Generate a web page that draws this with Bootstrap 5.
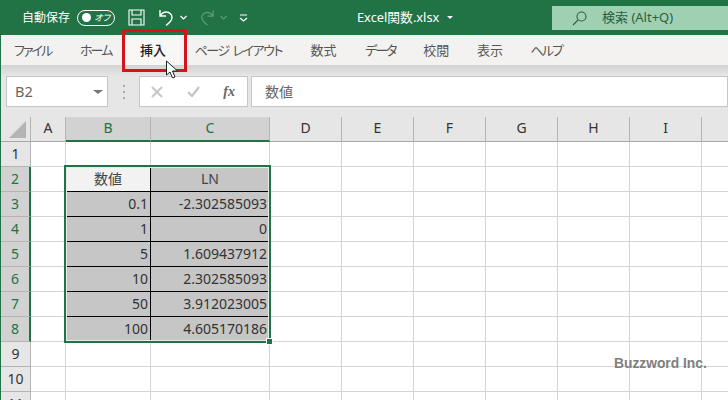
<!DOCTYPE html>
<html lang="ja">
<head>
<meta charset="utf-8">
<title>Excel関数.xlsx</title>
<link href="https://cdn.jsdelivr.net/npm/bootstrap@5.3.0/dist/css/bootstrap.min.css" rel="stylesheet">
<style>
html,body{width:728px;height:400px;overflow:hidden;margin:0;background:#fff}
body{font-family:"Noto Sans","Noto Sans CJK JP",sans-serif;color:#444;position:relative;font-feature-settings:"palt"}
.xl-title{height:35px;background:#217346;color:#fff;font-size:12px;padding-left:22px}
.xl-toggle{width:38px;height:16px;border:1px solid #fff;border-radius:8px;margin-left:7px;font-size:9px;font-style:italic;padding:0 4px;white-space:nowrap}
.xl-dot{width:9px;height:9px;border-radius:50%;background:#fff;flex:none}
.xl-save{margin-left:13px}
.xl-undo{margin-left:13px}
.xl-car{margin-left:5px}
.xl-redo{margin-left:12px}
.xl-qat{margin-left:12px;margin-right:0}
.xl-name{position:absolute;left:357px;top:0;height:35px;font-size:12.800px}
.xl-name-tri{width:0;height:0;border-left:3.500px solid transparent;border-right:3.500px solid transparent;border-top:3.500px solid #fff}
.xl-search{position:absolute;left:552px;top:6px;width:176px;height:24px;background:#9fd0b2;color:#2b5f40;font-size:13px;padding-left:20px}
.xl-search span{margin-left:15px}
.xl-tabs{height:30px;background:#f3f2f1;font-size:13px;padding-left:0;color:#555;border-left:1px solid #217346}
.xl-tab{padding:0 14.300px;height:30px;line-height:30px;white-space:nowrap}
.xl-tab-first{padding-left:13px}
.xl-kana{letter-spacing:-1.900px}
.xl-kana-long{letter-spacing:-1.500px;word-spacing:2px}
.xl-tab-tight{margin-right:-1px}
.xl-tab-on{background:#f8f7f6;color:#222;font-weight:500}
.xl-shade{height:11px;background:linear-gradient(#d2d2d2,#e6e6e6);border-left:1px solid #217346}
.xl-fbar{height:41px;background:#e6e6e6;padding:0 0 10px 5px;border-left:1px solid #217346}
.xl-box{background:#fff;border:1px solid #c6c6c6;height:31px}
.xl-namebox{width:102px;font-size:14.500px;color:#666;padding:0 4px 0 8px}
.xl-tri{width:0;height:0;border-left:5px solid transparent;border-right:5px solid transparent;border-top:4px solid #777}
.xl-dots{width:31px;justify-content:center;color:#aaa}
.xl-dots i{display:block;width:2px;height:2px;background:#aaa;margin:2px 0}
.xl-btns{width:109px;padding:0 12px 0 11px}
.xl-fx{font-family:"Liberation Serif",serif;font-style:italic;font-weight:700;font-size:14px;color:#666}
.xl-input{margin-left:3px;flex:1;font-size:14px;color:#666;padding-left:13px}
.xl-sheetwrap{position:relative;width:728px;border-left:1px solid #217346;overflow:hidden}
.xl-grid{border-collapse:separate;border-spacing:0;table-layout:fixed;width:760px;font-size:14px;color:#444}
.xl-grid td,.xl-grid th{height:25px;padding:0;line-height:23px;vertical-align:top;border-right:1px solid #d4d4d4;border-bottom:1px solid #d4d4d4;overflow:hidden;white-space:nowrap}
.xl-grid thead th{height:25px;padding:0;line-height:22px;vertical-align:top;background:#e6e6e6;border-right:1px solid #b4b4b4;border-bottom:1px solid #a8a8a8;text-align:center;font-weight:400;color:#333}
.xl-grid thead th.xl-hs{background:#d2d2d2;color:#217346;border-bottom:2px solid #217346}
.xl-grid tbody th{background:#e6e6e6;border-right:1px solid #b4b4b4;border-bottom:1px solid #b4b4b4;text-align:center;font-weight:400;color:#333}
.xl-grid tbody th.xl-hs{background:#d2d2d2;color:#217346;border-right:2px solid #217346}
.xl-corner{position:relative}
.xl-corner svg{position:absolute;left:8px;top:4px}
.xl-grid td.xl-c{background:#c6c6c6;border-color:#000;text-align:right;padding-right:2px;color:#333}
.xl-grid td.xl-l{text-align:center;padding-right:0;color:#444}
.xl-grid td.xl-w{background:#f2f2f2}
.xl-sel{position:absolute;left:63px;top:48px;width:207px;height:178px;border:2px solid #217346;box-shadow:inset 0 0 0 1px #e8e8e8;pointer-events:none}
.xl-handle{position:absolute;right:-4px;bottom:-4px;background:#217346;border:1px solid #fff;box-sizing:content-box;width:5px;height:5px}
.xl-red{position:absolute;left:122px;top:29px;width:65px;height:43px;border:3px solid #d3141a}
.xl-cursor{position:absolute;left:165px;top:60px}
.xl-mark{position:absolute;left:614px;top:354px;font-family:"Liberation Sans",sans-serif;font-size:13.800px;font-weight:700;color:#808080;white-space:nowrap}
</style>
</head>
<body>
<div class="xl-title d-flex align-items-center">
  <span>自動保存</span>
  <div class="xl-toggle d-flex align-items-center justify-content-between"><i class="xl-dot"></i><span>オフ</span></div>
  <svg class="xl-save" width="17" height="17" viewBox="0 0 17 17" fill="none" stroke="#fff" stroke-width="1.100"><path d="M1 1h15v15H1zM4 1v5h9V1M4 16v-6h9v6"/></svg>
  <svg class="xl-undo" width="17" height="18" viewBox="0 0 17 18" fill="none" stroke="#fff" stroke-width="1.400"><path d="M2 1v6h6M2 7c2-3 4-4 6-4 4 0 6 3 6 5.500 0 3-2 5-6 8"/></svg>
  <svg class="xl-car" width="7" height="5" viewBox="0 0 7 5" fill="none" stroke="#fff" stroke-width="1.200"><path d="M.5 1l3 3 3-3"/></svg>
  <svg class="xl-redo" width="16" height="18" viewBox="0 0 17 18" fill="none" stroke="#5f9c79" stroke-width="1.300"><path d="M15 1v6H9M15 7c-2-3-4-4-6-4C5 3 3 6 3 8.500c0 3 2 5 6 8"/></svg>
  <svg class="xl-car" width="7" height="5" viewBox="0 0 7 5" fill="none" stroke="#5f9c79" stroke-width="1.200"><path d="M.5 1l3 3 3-3"/></svg>
  <svg class="xl-qat" width="9" height="8" viewBox="0 0 9 8" fill="none" stroke="#fff" stroke-width="1.200"><path d="M1 1h7M1 4l3.500 3L8 4"/></svg>
</div>
<div class="xl-name d-flex align-items-center gap-2 text-white"><span>Excel関数.xlsx</span><i class="xl-name-tri"></i></div>
<div class="xl-search d-flex align-items-center">
  <svg width="15" height="15" viewBox="0 0 15 15" fill="none" stroke="#2b5f40" stroke-width="1.100"><circle cx="9.500" cy="5.500" r="4.500"/><path d="M6 9l-5 5"/></svg>
  <span>検索 (Alt+Q)</span>
</div>
<div class="xl-tabs d-flex">
  <div class="xl-tab xl-tab-first xl-kana">ファイル</div>
  <div class="xl-tab xl-kana">ホーム</div>
  <div class="xl-tab xl-tab-on">挿入</div>
  <div class="xl-tab xl-kana-long">ページ レイアウト</div>
  <div class="xl-tab">数式</div>
  <div class="xl-tab xl-kana xl-tab-tight">データ</div>
  <div class="xl-tab xl-tab-tight">校閲</div>
  <div class="xl-tab xl-tab-tight">表示</div>
  <div class="xl-tab xl-kana">ヘルプ</div>
</div>
<div class="xl-shade"></div>
<div class="xl-fbar d-flex">
  <div class="xl-box xl-namebox d-flex align-items-center justify-content-between"><span>B2</span><i class="xl-tri"></i></div>
  <div class="xl-dots d-flex flex-column align-items-center"><i></i><i></i><i></i></div>
  <div class="xl-box xl-btns d-flex align-items-center justify-content-between">
    <svg width="12" height="12" viewBox="0 0 12 12" stroke="#c4c4c4" stroke-width="1.800"><path d="M1 1l10 10M11 1L1 11"/></svg>
    <svg width="13" height="11" viewBox="0 0 13 11" fill="none" stroke="#c4c4c4" stroke-width="2.200"><path d="M1 6l4 4 7-9"/></svg>
    <span class="xl-fx">fx</span>
  </div>
  <div class="xl-box xl-input d-flex align-items-center">数値</div>
</div>
<div class="xl-sheetwrap">
  <table class="xl-grid">
    <colgroup>
      <col style="width:30px"><col style="width:35px"><col style="width:85px"><col style="width:119px"><col style="width:72px"><col style="width:72px"><col style="width:72px"><col style="width:72px"><col style="width:72px"><col style="width:72px"><col style="width:59px">
    </colgroup>
    <thead>
      <tr><th class="xl-corner"><svg width="17" height="17" viewBox="0 0 17 17"><path d="M17 0v17H0z" fill="#b4b4b4"/></svg></th><th>A</th><th class="xl-hs">B</th><th class="xl-hs">C</th><th>D</th><th>E</th><th>F</th><th>G</th><th>H</th><th>I</th><th></th></tr>
    </thead>
    <tbody>
      <tr><th>1</th><td></td><td></td><td></td><td></td><td></td><td></td><td></td><td></td><td></td><td></td></tr>
      <tr><th class="xl-hs">2</th><td></td><td class="xl-c xl-l xl-w">数値</td><td class="xl-c xl-l">LN</td><td></td><td></td><td></td><td></td><td></td><td></td><td></td></tr>
      <tr><th class="xl-hs">3</th><td></td><td class="xl-c">0.1</td><td class="xl-c">-2.302585093</td><td></td><td></td><td></td><td></td><td></td><td></td><td></td></tr>
      <tr><th class="xl-hs">4</th><td></td><td class="xl-c">1</td><td class="xl-c">0</td><td></td><td></td><td></td><td></td><td></td><td></td><td></td></tr>
      <tr><th class="xl-hs">5</th><td></td><td class="xl-c">5</td><td class="xl-c">1.609437912</td><td></td><td></td><td></td><td></td><td></td><td></td><td></td></tr>
      <tr><th class="xl-hs">6</th><td></td><td class="xl-c">10</td><td class="xl-c">2.302585093</td><td></td><td></td><td></td><td></td><td></td><td></td><td></td></tr>
      <tr><th class="xl-hs">7</th><td></td><td class="xl-c">50</td><td class="xl-c">3.912023005</td><td></td><td></td><td></td><td></td><td></td><td></td><td></td></tr>
      <tr><th class="xl-hs">8</th><td></td><td class="xl-c">100</td><td class="xl-c">4.605170186</td><td></td><td></td><td></td><td></td><td></td><td></td><td></td></tr>
      <tr><th>9</th><td></td><td></td><td></td><td></td><td></td><td></td><td></td><td></td><td></td><td></td></tr>
      <tr><th>10</th><td></td><td></td><td></td><td></td><td></td><td></td><td></td><td></td><td></td><td></td></tr>
      <tr><th>11</th><td></td><td></td><td></td><td></td><td></td><td></td><td></td><td></td><td></td><td></td></tr>
    </tbody>
  </table>
  <div class="xl-sel"><div class="xl-handle"></div></div>
</div>
<div class="xl-red"></div>
<svg class="xl-cursor" width="14" height="20" viewBox="0 0 14 20"><path d="M1.500 1v14l3.500-3 2.500 6 2.500-1-2.500-6h5z" fill="#fff" stroke="#222" stroke-width="1"/></svg>
<div class="xl-mark">Buzzword Inc.</div>
</body>
</html>
